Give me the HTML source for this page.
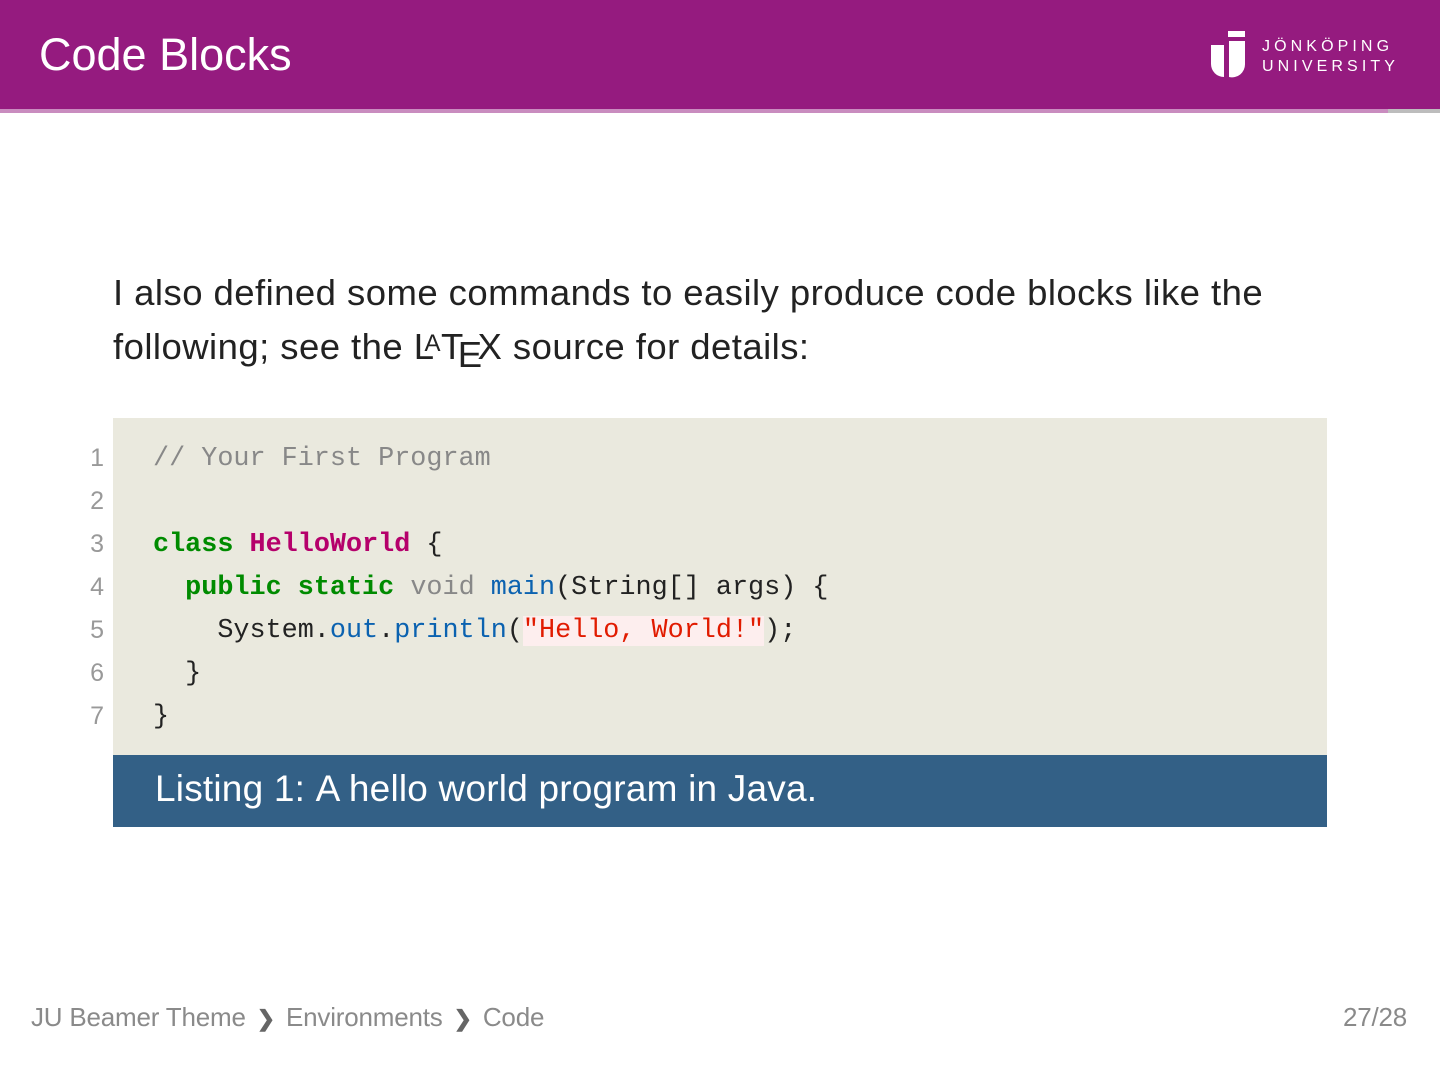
<!DOCTYPE html>
<html><head><meta charset="utf-8"><style>
body{margin:0;width:1440px;height:1080px;background:#fff;position:relative;overflow:hidden;font-family:"Liberation Sans",sans-serif}
.hdr{position:absolute;left:0;top:0;width:1440px;height:109px;background:#951b7f}
.l1{position:absolute;left:0;top:109px;width:1388px;height:4px;background:#c98cbf}
.l2{position:absolute;left:1388px;top:109px;width:52px;height:4px;background:#bdbdbd}
.title{position:absolute;left:39px;top:28px;color:#fff;font-size:45px;line-height:54px}
.uni{position:absolute;left:1262px;top:37px;color:#fff;font-size:16px;letter-spacing:4.1px;line-height:20px}
.p{position:absolute;left:113px;top:266px;font-size:36.5px;line-height:54px;color:#222;letter-spacing:0.45px;font-weight:300}
.code{position:absolute;left:113px;top:418px;width:1214px;height:337px;background:#eae9de}
.cap{position:absolute;left:113px;top:755px;width:1214px;height:72px;background:#336086;color:#fff;font-size:37px;line-height:68px;letter-spacing:0.2px}
.ln{position:absolute;left:80px;width:24px;text-align:right;color:#999;font-size:25px}
.cl{position:absolute;left:153px;font-family:"Liberation Mono",monospace;font-size:26.8px;white-space:pre;color:#222}
.foot{position:absolute;top:1002px;font-size:26px;color:#8a8a8a;letter-spacing:-0.2px}
.g{color:#008b00;font-weight:bold}.m{color:#b5006b;font-weight:bold}.c{color:#888}.b{color:#0b62b0}.s{color:#e11b00;background:#fdeeee}
</style></head><body>
<div class="hdr"></div><div class="l1"></div><div class="l2"></div>
<div class="title">Code Blocks</div>
<svg style="position:absolute;left:1211px;top:31px" width="38" height="47" viewBox="0 0 38 47">
<rect x="17" y="0" width="17" height="6" fill="#fff"/>
<path d="M0 14 H13 V46 A13 13 0 0 1 0 33 Z" fill="#fff"/>
<path d="M18 10 H34 V33 A13 13 0 0 1 18 46 Z" fill="#fff"/>
</svg>
<div class="uni">JÖNKÖPING<br>UNIVERSITY</div>
<div class="p">I also defined some commands to easily produce code blocks like the<br>following; see the L<span style="font-size:24px;position:relative;top:-8px;margin-left:-10px">A</span>T<span style="position:relative;top:8px;margin-left:-6px">E</span><span style="margin-left:-5px">X</span> source for details:</div>
<div class="code"></div>
<div class="ln" style="top:444px">1</div><div class="ln" style="top:487px">2</div><div class="ln" style="top:530px">3</div><div class="ln" style="top:573px">4</div><div class="ln" style="top:616px">5</div><div class="ln" style="top:659px">6</div><div class="ln" style="top:702px">7</div>
<div class="cl" style="top:444px"><span class="c">// Your First Program</span></div>
<div class="cl" style="top:530px"><span class="g">class</span> <span class="m">HelloWorld</span> {</div>
<div class="cl" style="top:573px">  <span class="g">public static</span> <span class="c">void</span> <span class="b">main</span>(String[] args) {</div>
<div class="cl" style="top:616px">    System.<span class="b">out</span>.<span class="b">println</span>(<span class="s">"Hello, World!"</span>);</div>
<div class="cl" style="top:659px">  }</div>
<div class="cl" style="top:702px">}</div>
<div class="cap"><span style="margin-left:42px">Listing 1:</span> <span style="font-weight:300">A hello world program in Java.</span></div>
<div class="foot" style="left:31px">JU Beamer Theme <b style="color:#666;font-size:22px;margin:0 4px">&#10095;</b> Environments <b style="color:#666;font-size:22px;margin:0 4px">&#10095;</b> Code</div>
<div class="foot" style="left:1343px">27/28</div>
</body></html>
